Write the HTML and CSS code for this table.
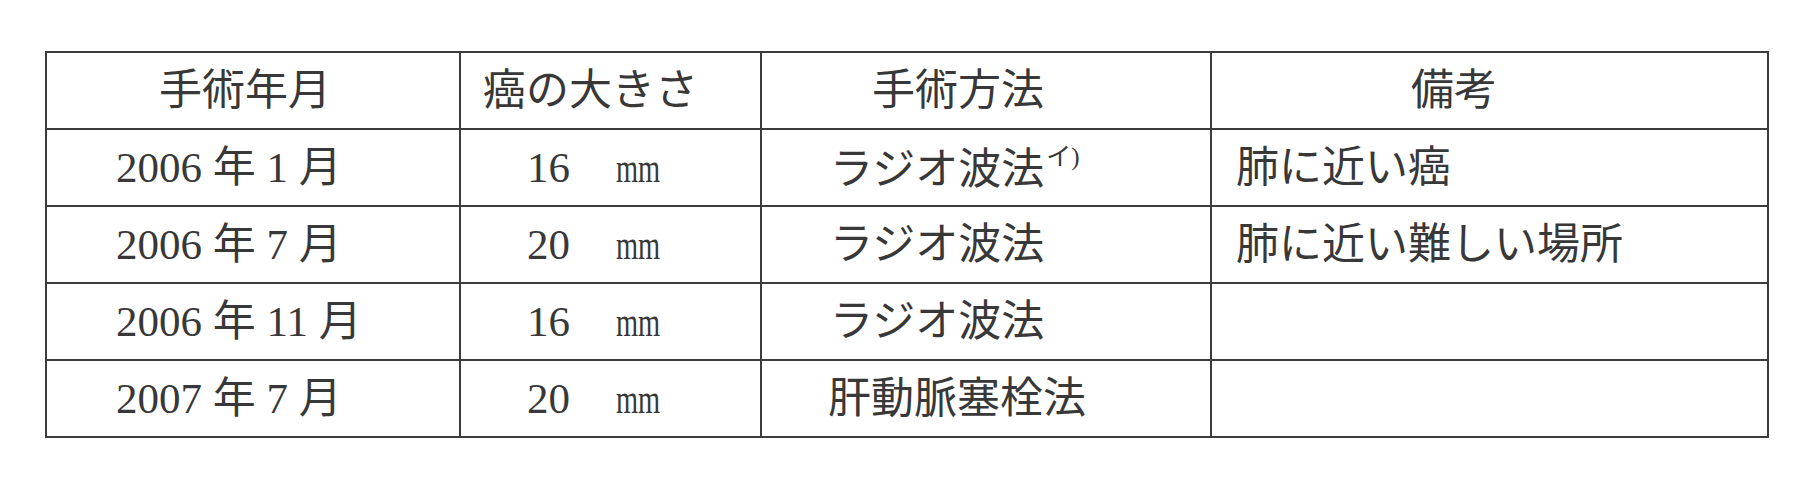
FILE: index.html
```html
<!DOCTYPE html>
<html lang="ja">
<head>
<meta charset="utf-8">
<title>手術歴</title>
<link rel="stylesheet" href="styles.css">
</head>
<body>
<div class="page">
  <table class="history">
    <colgroup>
      <col class="c-date">
      <col class="c-size">
      <col class="c-method">
      <col class="c-note">
    </colgroup>
    <thead>
      <tr>
        <th class="h-date">手術年月</th>
        <th class="h-size">癌の大きさ</th>
        <th class="h-method">手術方法</th>
        <th class="h-note">備考</th>
      </tr>
    </thead>
    <tbody>
      <tr>
        <td class="date">2006 年 1 月</td>
        <td class="size">16<span class="unit">mm</span></td>
        <td class="method">ラジオ波法<sup class="ref">イ)</sup></td>
        <td class="note">肺に近い癌</td>
      </tr>
      <tr>
        <td class="date">2006 年 7 月</td>
        <td class="size">20<span class="unit">mm</span></td>
        <td class="method">ラジオ波法</td>
        <td class="note">肺に近い難しい場所</td>
      </tr>
      <tr>
        <td class="date">2006 年 11 月</td>
        <td class="size">16<span class="unit">mm</span></td>
        <td class="method">ラジオ波法</td>
        <td class="note"></td>
      </tr>
      <tr>
        <td class="date">2007 年 7 月</td>
        <td class="size">20<span class="unit">mm</span></td>
        <td class="method method-long">肝動脈塞栓法</td>
        <td class="note"></td>
      </tr>
    </tbody>
  </table>
</div>
</body>
</html>
```

FILE: styles.css
```css
html, body {
  margin: 0;
  padding: 0;
  background: #ffffff;
}

.page {
  padding: 51px 0 0 45px;
}

.history {
  border-collapse: collapse;
  table-layout: fixed;
  width: 1724px;
  font-family: "Liberation Serif", "Noto Sans CJK JP", serif;
  font-size: 43px;
  color: #383838;
}

.c-date { width: 414px; }
.c-size { width: 301px; }
.c-method { width: 450px; }
.c-note { width: 557px; }

.history tr {
  height: 77px;
}

.history th,
.history td {
  border: 2px solid #3c3c3c;
  padding: 0;
  text-align: left;
  vertical-align: middle;
  font-weight: 400;
  line-height: 1;
  white-space: nowrap;
}

.h-date { padding-left: 112px !important; }
.h-size { padding-left: 22px !important; }
.h-method { padding-left: 110px !important; }
.h-note { padding-left: 199px !important; }

.date { padding-left: 69px !important; }
.size { padding-left: 66px !important; }
.method { padding-left: 68px !important; }
.method-long { padding-left: 66px !important; }
.note { padding-left: 24px !important; }

.unit {
  display: inline-block;
  margin-left: 46px;
  transform: scaleX(0.66);
  transform-origin: left center;
}

.ref {
  font-size: 25px;
  line-height: 1;
  vertical-align: 19px;
  margin-left: 2px;
}
```
